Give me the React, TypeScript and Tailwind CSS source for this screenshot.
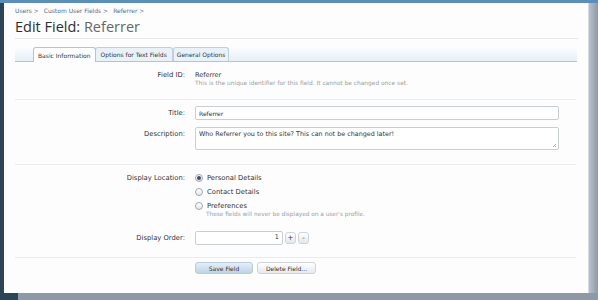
import React from "react";

const font = { fontFamily: "'DejaVu Sans', Verdana, sans-serif" };

function Row({ label, children }: { label: string; children: React.ReactNode }) {
  return (
    <div className="flex items-start">
      <div className="w-[180px] shrink-0 pr-[10px] text-right text-[6.8px] text-[#333] leading-[14px]">{label}</div>
      <div className="flex-1">{children}</div>
    </div>
  );
}

function Radio({ checked, label }: { checked?: boolean; label: string }) {
  return (
    <div className="flex items-center h-[14px] gap-[4px]">
      <span className="w-[8px] h-[8px] rounded-full border border-[#a0a8b0] bg-[linear-gradient(#fff,#e4e8ec)] flex items-center justify-center">
        {checked && <span className="w-[4px] h-[4px] rounded-full bg-[#3c4f63]" />}
      </span>
      <span className="text-[6.8px] text-[#333]">{label}</span>
    </div>
  );
}

export default function App() {
  return (
    <div className="w-[598px] h-[300px] overflow-hidden bg-[#8e99a7] flex flex-col" style={font}>
      <div className="h-[3px] bg-[#5a8fbb] shrink-0" />
      <div className="flex h-[290px] shrink-0">
        <div className="w-[4px] bg-[#2a4458]" />
        <div className="w-[585px] bg-[#fdfdfe] border-r border-[#d6dbe0] flex flex-col pl-[11px] pr-[10px]">
          <div className="h-[14px] text-[6px] text-[#5b6b7d] flex items-center gap-[5px]">
            <span>Users &gt;</span>
            <span>Custom User Fields &gt;</span>
            <span>Referrer &gt;</span>
          </div>
          <div className="h-[20px] text-[14.5px] leading-[20px] text-[#2e2e2e]" style={{ fontFamily: "'Open Sans', 'DejaVu Sans', sans-serif" }}>
            Edit Field: <span className="text-[#666]">Referrer</span>
          </div>
          <div className="h-px bg-[#e6e8eb] mt-[1px]" />
          <div className="mt-[8px] h-[15px] flex items-end pl-[18px] bg-[linear-gradient(#fdfdfe,#e5f0f9)] border-b border-[#a9c8df] mr-[1px]">
            <div className="h-[15px] px-[4px] flex items-center text-[6px] text-[#333] bg-white border border-b-0 border-[#a9c8df] rounded-t-[3px] -mb-px relative z-10">Basic Information</div>
            <div className="h-[14px] px-[5px] flex items-center text-[6px] text-[#333] bg-[#eaf2f9] border border-b-0 border-[#b8d1e4] rounded-t-[3px] -ml-px">Options for Text Fields</div>
            <div className="h-[14px] px-[3px] flex items-center text-[6px] text-[#333] bg-[#eaf2f9] border border-b-0 border-[#b8d1e4] rounded-t-[3px]">General Options</div>
          </div>

          <div className="mt-[6px]">
            <Row label="Field ID:">
              <div className="text-[6.5px] text-[#333] leading-[14px]">Referrer</div>
              <div className="text-[5.9px] leading-[8px] text-[#9a9fa5] -mt-[3px]">This is the unique identifier for this field. It cannot be changed once set.</div>
            </Row>
          </div>
          <div className="h-px bg-[#e9edf0] mt-[12px] mr-[2px]" />

          <div className="mt-[6px] flex flex-col gap-[7px]">
            <Row label="Title:">
              <div className="w-[364px] h-[14px] border border-[#c9ced3] rounded-[2px] bg-white text-[6px] text-[#333] px-[3px] flex items-center">Referrer</div>
            </Row>
            <Row label="Description:">
              <div className="relative w-[364px] h-[23px] border border-[#c9ced3] rounded-[2px] bg-white text-[6.4px] text-[#333] px-[3px] pt-[2px]">
                Who Referrer you to this site? This can not be changed later!
                <svg className="absolute right-[1px] bottom-[1px]" width="5" height="5" viewBox="0 0 5 5">
                  <path d="M4 1L1 4M4 3L3 4" stroke="#999" strokeWidth="0.8" />
                </svg>
              </div>
            </Row>
          </div>
          <div className="h-px bg-[#e9edf0] mt-[14px] mr-[2px]" />

          <div className="mt-[6px]">
            <Row label="Display Location:">
              <Radio checked label="Personal Details" />
              <Radio label="Contact Details" />
              <Radio label="Preferences" />
              <div className="text-[5.8px] leading-[8px] text-[#9a9fa5] pl-[11px] -mt-[3px]">These fields will never be displayed on a user's profile.</div>
            </Row>
          </div>
          <div className="mt-[13px]">
            <Row label="Display Order:">
              <div className="flex items-center gap-[2px]">
                <div className="w-[88px] h-[14px] border border-[#c9ced3] rounded-[2px] bg-white text-[6.5px] text-[#333] px-[3px] flex items-center justify-end">1</div>
                <div className="w-[11px] h-[12px] rounded-[3px] border border-[#cfd4d9] bg-[linear-gradient(#fff,#e3e7eb)] text-[7px] flex items-center justify-center text-[#333]">+</div>
                <div className="w-[11px] h-[12px] rounded-[3px] border border-[#cfd4d9] bg-[linear-gradient(#fff,#e3e7eb)] text-[7px] flex items-center justify-center text-[#333]">-</div>
              </div>
            </Row>
          </div>
          <div className="h-px bg-[#e3edf2] mt-[12px] mr-[2px]" />
          <div className="mt-[4px] flex pl-[180px] gap-[4px]">
            <div className="w-[58px] h-[12px] rounded-[3px] border border-[#b6cde0] bg-[linear-gradient(#e4eff8,#bcd4e8)] text-[6px] text-[#333] flex items-center justify-center">Save Field</div>
            <div className="w-[59px] h-[12px] rounded-[3px] border border-[#cdd3d9] bg-[linear-gradient(#fff,#e5e9ed)] text-[6px] text-[#333] flex items-center justify-center">Delete Field...</div>
          </div>
        </div>
        <div className="w-[9px] bg-[linear-gradient(90deg,#b7c0ca,#8e99a7)]" />
      </div>
      <div className="flex flex-1">
        <div className="w-[18px] bg-[#2a4458]" />
        <div className="flex-1 bg-[#8e99a7]" />
      </div>
    </div>
  );
}
